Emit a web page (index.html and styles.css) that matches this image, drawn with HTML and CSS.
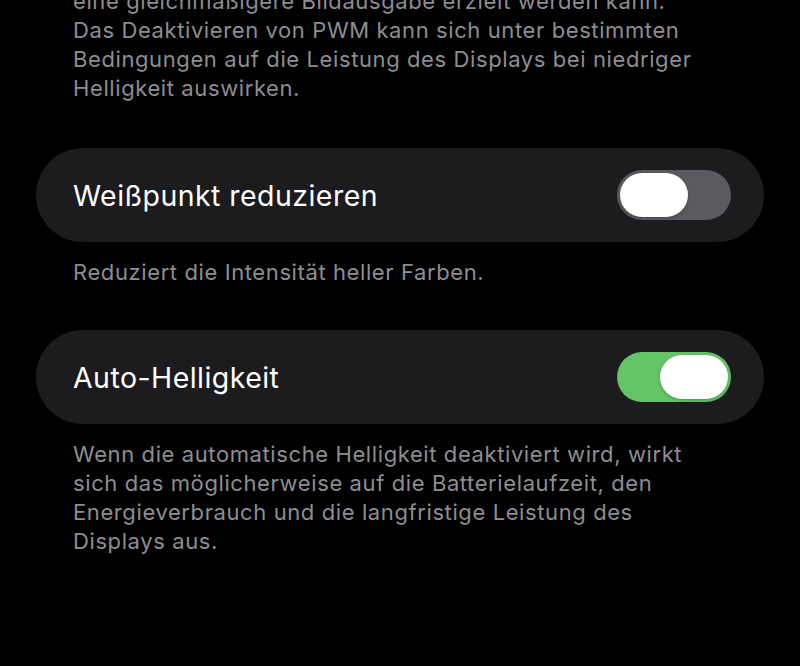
FILE: index.html
```html
<!DOCTYPE html>
<html lang="de">
<head>
<meta charset="utf-8">
<title>Anzeige</title>
<link rel="stylesheet" href="styles.css">
</head>
<body>
<main class="settings">
  <p class="footnote footnote--lead">eine gleichmäßigere Bildausgabe erzielt werden kann.<br>Das Deaktivieren von PWM kann sich unter bestimmten<br>Bedingungen auf die Leistung des Displays bei niedriger<br>Helligkeit auswirken.</p>

  <section class="group">
    <div class="cell">
      <span class="cell-label">Weißpunkt reduzieren</span>
      <span class="switch" role="switch" aria-checked="false"><span class="switch-knob"></span></span>
    </div>
    <p class="footnote">Reduziert die Intensität heller Farben.</p>
  </section>

  <section class="group">
    <div class="cell">
      <span class="cell-label">Auto-Helligkeit</span>
      <span class="switch switch--on" role="switch" aria-checked="true"><span class="switch-knob"></span></span>
    </div>
    <p class="footnote">Wenn die automatische Helligkeit deaktiviert wird, wirkt<br>sich das möglicherweise auf die Batterielaufzeit, den<br>Energieverbrauch und die langfristige Leistung des<br>Displays aus.</p>
  </section>
</main>
</body>
</html>
```

FILE: styles.css
```css
html, body {
  margin: 0;
  padding: 0;
  background: #000;
  height: 100%;
  overflow: hidden;
}

body {
  font-family: "Inter", "Roboto", "Noto Sans", sans-serif;
  -webkit-font-smoothing: antialiased;
}

.settings {
  padding: 0 36px;
  margin-top: -13px;
  display: flex;
  flex-direction: column;
}

.footnote {
  margin: 0;
  padding: 0 37px;
  color: #8d8d92;
  font-size: 22px;
  line-height: 29px;
  letter-spacing: 0.6px;
  white-space: nowrap;
}

.footnote--lead {
  margin-bottom: 45px;
}

.group {
  display: flex;
  flex-direction: column;
  gap: 16px;
  margin-bottom: 43px;
}

.cell {
  height: 94px;
  border-radius: 47px;
  background: #1c1c1e;
  display: flex;
  align-items: center;
  justify-content: space-between;
  padding: 0 33px 0 37px;
}

.cell-label {
  color: #fff;
  font-size: 28.5px;
  letter-spacing: 0.45px;
}

.switch {
  width: 114px;
  height: 50px;
  border-radius: 25px;
  background: #5a5a5f;
  padding: 3px;
  box-sizing: border-box;
  display: flex;
  justify-content: flex-start;
}

.switch--on {
  background: #64c466;
  justify-content: flex-end;
}

.switch-knob {
  width: 68px;
  height: 44px;
  border-radius: 22px;
  background: #fff;
  box-shadow: 0 1px 3px rgba(0, 0, 0, 0.25);
}
```
